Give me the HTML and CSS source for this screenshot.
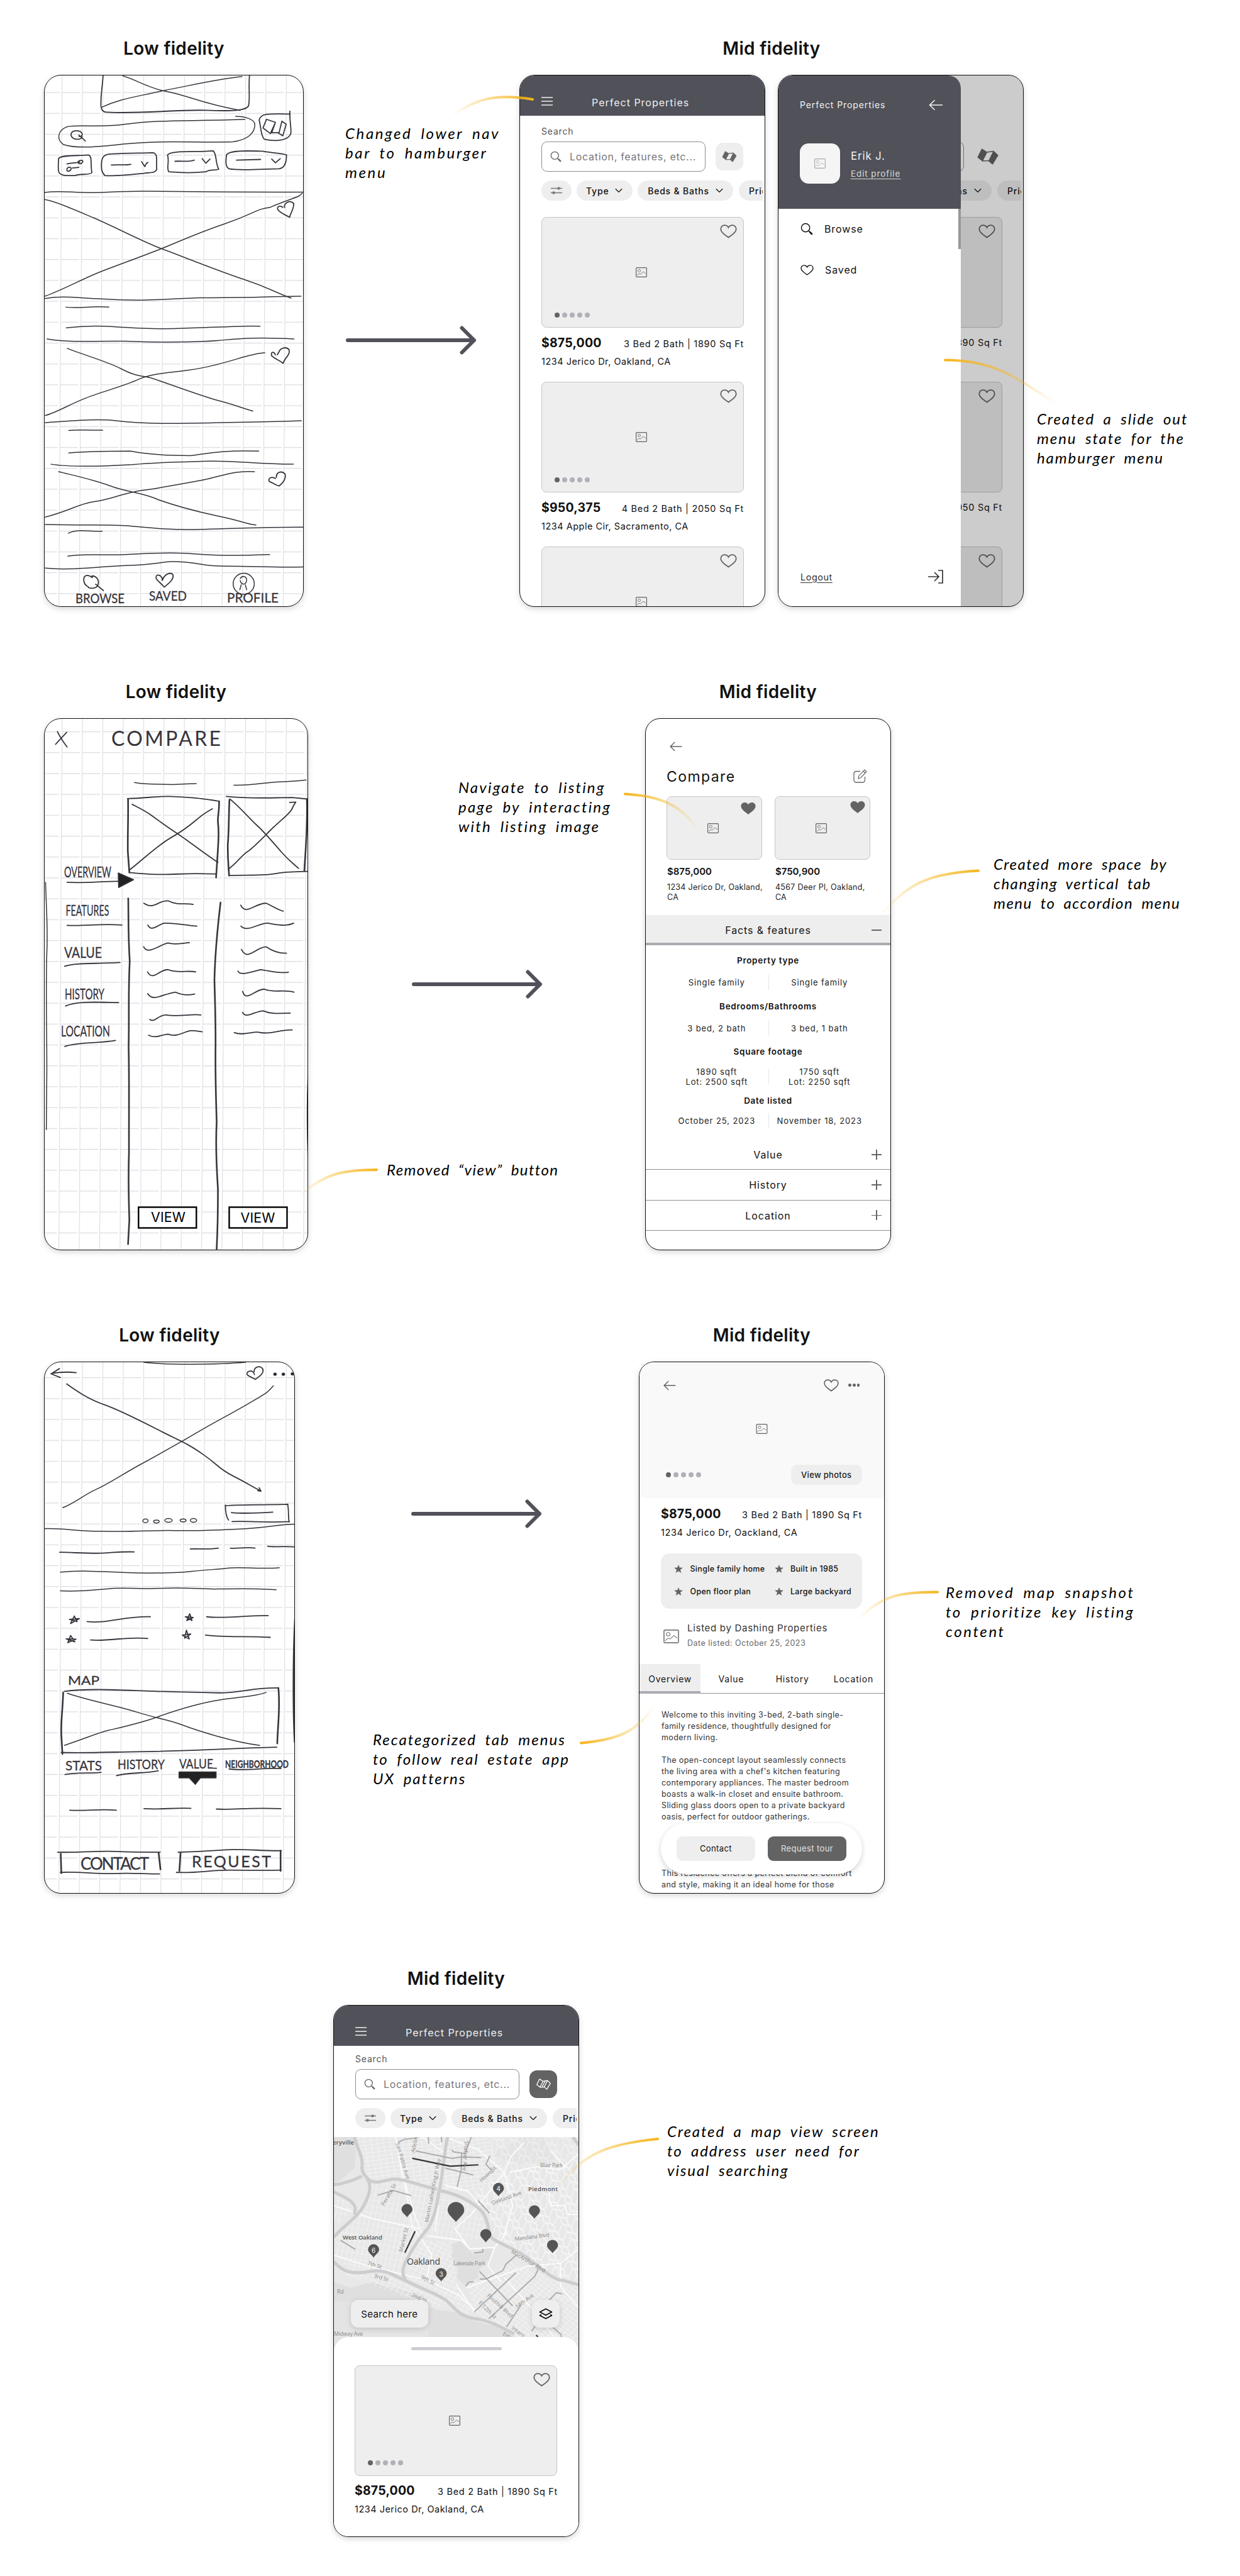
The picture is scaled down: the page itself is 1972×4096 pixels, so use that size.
FILE: index.html
```html
<!DOCTYPE html>
<html lang="en">

<head>
    <meta charset="UTF-8">
    <meta name="viewport" content="width=device-width, initial-scale=1.0">
    <title>Perfect Properties - Wireframes</title>

    <link rel="stylesheet" href="styles.css">
</head>

<body>
    <!-- shared icons -->
    <svg class="sprite" aria-hidden="true">
        <defs>
            <symbol id="icon-menu" viewBox="0 0 18 14">
                <path d="M0 1h18M0 7h18M0 13h18" fill="none" stroke="currentColor" stroke-width="1.4" />
            </symbol>
            <symbol id="icon-search" viewBox="0 0 18 18">
                <circle cx="7.3" cy="7.3" r="6" fill="none" stroke="currentColor" stroke-width="1.3" />
                <path d="M11.6 11.6l1.6 1.6" stroke="currentColor" stroke-width="1.2" />
                <path d="M13.4 13.4l2.8 2.8" stroke="currentColor" stroke-width="2.4" stroke-linecap="round" />
            </symbol>
            <symbol id="icon-map" viewBox="0 0 34 26">
                <path d="M7.500 1L1 14l7.500 6L15.500 6zM26 4.500L18.500 20l6 5L33 11z" fill="currentColor" stroke="currentColor" stroke-width="1.2" stroke-linejoin="round" />
                <path d="M15.500 6L26 4.500M8.500 20l10-.5" stroke="currentColor" stroke-width="1.6" />
            </symbol>
            <symbol id="icon-map-outline" viewBox="0 0 34 26">
                <path d="M7.500 1L1 14l7.500 6 10-.5 6 5.500L33 11l-7-6.500L15.500 6zM15.500 6L8.500 20M26 4.500L18.500 19.500M20.500 5.500L13.500 19.500" fill="none" stroke="currentColor" stroke-width="1.900" stroke-linejoin="round" />
            </symbol>
            <symbol id="icon-filter" viewBox="0 0 18 14">
                <path d="M0 3.500h18M0 10.500h18" stroke="currentColor" stroke-width="1.4" />
                <circle cx="12.500" cy="3.500" r="2.200" fill="currentColor" />
                <circle cx="4.500" cy="10.500" r="2.200" fill="currentColor" />
            </symbol>
            <symbol id="icon-chevron" viewBox="0 0 12 8">
                <path d="M.8 1.200L6 6.400l5.200-5.200" fill="none" stroke="currentColor" stroke-width="1.300" />
            </symbol>
            <symbol id="icon-heart" viewBox="0 0 28 23">
                <path d="M14 21.500C11 19 1.200 14 1.200 7.500 1.200 3.800 4 1.200 7.300 1.200c3 0 5.500 1.600 6.700 3.900 1.200-2.300 3.700-3.900 6.700-3.900 3.300 0 6.100 2.600 6.100 6.300C26.800 14 17 19 14 21.500z" fill="none" stroke="currentColor" stroke-width="1.900" />
            </symbol>
            <symbol id="icon-heart-fill" viewBox="0 0 28 23">
                <path d="M14 23C11 20 0 14.500 0 7 0 3 3 0 7 0c3 0 5.800 1.400 7 4 1.200-2.600 4-4 7-4 4 0 7 3 7 7 0 7.500-11 13-14 16z" fill="currentColor" />
            </symbol>
            <symbol id="icon-image" viewBox="0 0 18 16">
                <rect x=".6" y=".6" width="16.800" height="14.800" rx="1.200" fill="none" stroke="currentColor" stroke-width="1.200" />
                <circle cx="5.500" cy="5.500" r="2.100" fill="none" stroke="currentColor" stroke-width=".8" />
                <path d="M2 13l2.800-2.600 3 .5L12 7l4 3" fill="none" stroke="currentColor" stroke-width=".8" />
            </symbol>
            <symbol id="icon-back" viewBox="0 0 22 18">
                <path d="M21.500 9H1M9 1.200L1 9l8 7.800" fill="none" stroke="currentColor" stroke-width="1.600" />
            </symbol>
            <symbol id="icon-logout" viewBox="0 0 24 22">
                <path d="M0 11h17M10 4l7 7-7 7M16 1h7v20h-7" fill="none" stroke="currentColor" stroke-width="1.700" />
            </symbol>
            <symbol id="icon-edit" viewBox="0 0 22 22">
                <path d="M11 3.500H4.500A3.500 3.500 0 0 0 1 7v10.500A3.500 3.500 0 0 0 4.500 21H15a3.500 3.500 0 0 0 3.500-3.500V12" fill="none" stroke="currentColor" stroke-width="1.300" />
                <path d="M8 15l.8-4.300L18 1.200 21 4l-9.300 9.700zM16 3.300L19 6.200" fill="none" stroke="currentColor" stroke-width="1.200" />
            </symbol>
            <symbol id="icon-star" viewBox="0 0 14 13">
                <path d="M7 0l1.800 4.600 5.200.2-4.100 3.100L11.400 13 7 10.200 2.600 13l1.500-5.100L0 4.800l5.200-.2z" fill="currentColor" />
            </symbol>
            <symbol id="icon-layers" viewBox="0 0 22 18">
                <path d="M11 1.200l9.500 5L11 11.300l-9.500-5zM1 11.500l10 5.300 10-5.300M1 11.500l3-.8M21 11.500l-3-.8" fill="none" stroke="currentColor" stroke-width="1.800" stroke-linejoin="round" />
            </symbol>
            <symbol id="arrow" viewBox="0 0 208 46">
                <path d="M3 23h201M184.500 3.500L204 23l-19.500 19.500" fill="none" stroke="#505159" stroke-width="6" stroke-linecap="round" stroke-linejoin="round" />
            </symbol>
            <pattern id="grid" width="110" height="55.700" patternUnits="userSpaceOnUse" patternTransform="translate(48 46) skewX(-.7)">
                <path d="M0 0h4v55.700h-4z" fill="#dedee3" />
                <path d="M0 0h100v2h-100z" fill="#d9dade" />
            </pattern>
            <g id="pin">
                <path d="M0 0C-2-3.600-8.800-7.800-8.800-12.600a8.800 8.800 0 0 1 17.600 0C8.800-7.800 2-3.600 0 0z" fill="#555" />
            </g>
        </defs>
    </svg>

    <!-- 1. Browse -->
    <section class="row">
        <div class="stage stage-first">
            <h2>Low fidelity</h2>
            <div class="phone sketch sketch-browse">
                <svg width="413" height="846" viewBox="0 0 413 846">
                    <g transform="scale(.29476 .59607) translate(-65 -113)">
                        <rect class="paper" x="65" y="113" width="1402" height="1420" />
                        <g class="ink">
                            <path class="bold" d="M380 113C378 140 366 165 369 195 372 208 385 211 400 211 600 216 780 203 940 206S1150 205 1164 195C1175 180 1164 150 1170 113" />
                            <path d="M487 114C560 125 620 145 707 154 830 164 900 187 1120 206M372 198C470 175 540 172 700 154 860 139 1000 122 1130 116" />
                            <path d="M1145 230C900 235 700 230 500 243 370 253 240 243 185 250 135 260 128 283 165 297 240 310 380 302 490 296 700 285 900 293 1080 290 1165 285 1200 265 1199 243 1195 230 1150 222 1095 222" />
                            <path class="bold" d="M1388 208C1385 235 1400 260 1392 270 1370 290 1290 288 1250 283 1230 275 1230 240 1222 232 1230 215 1260 214 1390 216M1243 253L1262 230 1310 238 1283 268zM1310 238L1290 266 1330 265 1345 235 1368 243 1350 274 1325 266" />
                            <path class="bold" d="M268 277C262 285 215 287 207 272 208 260 235 259 255 262 275 268 270 277 250 275M250 272C260 278 272 280 284 288" />
                            <path class="bold" d="M140 335C150 324 250 328 300 325 325 328 310 350 320 372 310 380 250 374 230 380 190 380 150 382 141 370 136 360 140 345 140 335M186 349C215 345 235 347 255 344M245 343C255 338 275 338 270 344 262 350 245 350 245 343M215 360L250 358M185 365C185 357 208 355 208 362 205 369 185 371 185 365" />
                            <path class="bold" d="M372 345C375 325 400 322 430 322 510 320 600 320 650 319 680 322 665 345 670 362 665 375 630 371 600 374 520 378 450 382 390 380 370 370 370 360 372 345M425 352C460 350 500 353 530 350M588 343C595 348 600 352 606 356 610 350 615 346 622 345" />
                            <path class="bold" d="M728 325C745 312 880 318 975 314 995 325 985 345 1004 363 980 368 960 362 935 370 860 374 780 372 735 370 720 360 740 345 728 325M768 342C800 340 840 345 872 339M915 335L935 347 957 336" />
                            <path class="bold" d="M1046 325C1060 310 1200 315 1240 315 1290 320 1340 320 1370 325 1370 345 1360 360 1330 362 1250 362 1120 368 1060 362 1035 355 1045 335 1046 325M1100 339L1230 337M1290 336L1310 346 1336 335" />
                            <path d="M65 425C160 418 230 428 370 425 620 418 700 425 1460 424M65 708C160 700 230 706 370 709 600 716 700 710 900 706 1180 707 1300 702 1448 702" />
                            <path d="M65 444C130 450 220 470 330 493S600 558 700 576 1000 634 1140 657 1300 690 1395 707M65 702C140 690 280 653 380 634S600 594 700 574 880 535 1040 508 1200 470 1280 465C1400 440 1440 438 1455 427" />
                            <path class="bold" d="M1350 465C1340 460 1320 460 1322 470 1335 480 1370 487 1387 491 1390 480 1410 470 1409 455 1390 443 1350 455 1360 465" />
                            <path d="M180 731C260 735 320 727 411 731M182 786C330 778 420 783 500 785 700 792 800 787 950 785S1150 780 1227 782M78 816C200 827 330 820 500 822 700 826 900 824 1000 820S1200 810 1410 816" />
                            <path d="M187 841C240 853 400 875 480 896S600 914 640 920 920 970 1000 980 1130 1000 1188 1008M68 1020C130 1012 200 990 290 973S500 940 570 924 750 905 830 900 1000 884 1070 874 1200 854 1253 853" />
                            <path class="bold" d="M1310 858C1300 848 1283 850 1290 861 1310 870 1330 872 1352 881 1360 865 1390 860 1384 845 1370 835 1335 840 1330 850L1320 858" />
                            <path d="M68 1039C200 1035 340 1028 450 1034S640 1042 780 1041 1300 1037 1450 1034M195 1060C250 1057 300 1060 378 1059M195 1120C300 1115 400 1115 530 1115 640 1126 750 1127 850 1127 930 1123 1000 1112 1220 1115M100 1150C200 1158 400 1155 540 1151 700 1144 800 1144 950 1142S1200 1150 1407 1150" />
                            <path d="M141 1170C240 1182 320 1190 420 1208S590 1225 680 1245C880 1280 1000 1286 1100 1300S1160 1308 1205 1312M68 1291C200 1275 250 1255 330 1250S500 1226 590 1220 780 1205 900 1194 1080 1166 1197 1170" />
                            <path class="bold" d="M1310 1188C1290 1182 1268 1187 1277 1196 1300 1200 1310 1206 1330 1208 1350 1200 1370 1190 1362 1176 1345 1167 1315 1170 1315 1185" />
                            <path d="M68 1311C300 1314 420 1310 530 1315S740 1326 900 1324 1300 1317 1460 1318M193 1334C240 1322 300 1330 375 1329M190 1395C300 1388 400 1394 500 1391S740 1385 840 1388 1000 1396 1279 1391M68 1427C200 1434 320 1424 520 1420S700 1406 820 1411 900 1422 1050 1422 1300 1426 1460 1424" />
                            <path class="bold" d="M300 1477C270 1470 270 1450 290 1447 310 1443 330 1460 320 1448 345 1448 365 1460 350 1475 330 1485 300 1480 300 1477M340 1470L382 1487M700 1458C700 1445 660 1440 667 1455 680 1465 700 1470 710 1478 730 1470 770 1455 755 1443 735 1438 710 1445 700 1460" />
                            <ellipse cx="1139" cy="1469" rx="57" ry="28" />
                            <path d="M1120 1455C1130 1447 1155 1447 1155 1460 1150 1474 1125 1472 1120 1460M1125 1472L1118 1485M1148 1472L1155 1485" />
                        </g>
                    </g>
                    <g class="hand" font-size="21">
                        <text x="49" y="839" textLength="78" lengthAdjust="spacingAndGlyphs">BROWSE</text>
                        <text x="166" y="835" textLength="60" lengthAdjust="spacingAndGlyphs">SAVED</text>
                        <text x="290" y="838" textLength="82" lengthAdjust="spacingAndGlyphs">PROFILE</text>
                    </g>
                </svg>
            </div>
        </div>

        <div class="middle middle-browse">
            <p class="note note-browse">Changed lower nav<br>bar to hamburger<br>menu</p>
            <svg class="arrow" width="208" height="46"><use href="#arrow" /></svg>
        </div>

        <div class="stage stage-pair">
            <h2>Mid fidelity</h2>
            <div class="pair">
                <div class="phone">
                    <header class="topbar">
                        <svg width="18" height="14"><use href="#icon-menu" /></svg>
                        <span>Perfect Properties</span>
                    </header>
                    <div class="browse">
                        <div class="label">Search</div>
                        <div class="search-row">
                            <div class="search"><svg width="18" height="18"><use href="#icon-search" /></svg>Location, features, etc...</div>
                            <div class="map-button"><svg width="24" height="18"><use href="#icon-map" /></svg></div>
                        </div>
                        <div class="chips">
                            <div class="chip chip-filter"><svg width="18" height="14"><use href="#icon-filter" /></svg></div>
                            <div class="chip chip-type">Type<svg width="12" height="8"><use href="#icon-chevron" /></svg></div>
                            <div class="chip chip-beds">Beds &amp; Baths<svg width="12" height="8"><use href="#icon-chevron" /></svg></div>
                            <div class="chip chip-price">Price</div>
                        </div>
                        <article class="listing">
                            <div class="photo">
                                <svg class="heart" width="27" height="22"><use href="#icon-heart" /></svg>
                                <svg width="18" height="16"><use href="#icon-image" /></svg>
                                <div class="dots"><i></i><i></i><i></i><i></i><i></i></div>
                            </div>
                            <div class="facts"><b>$875,000</b><span>3 Bed 2 Bath | 1890 Sq Ft</span></div>
                            <div class="address">1234 Jerico Dr, Oakland, CA</div>
                        </article>
                        <article class="listing">
                            <div class="photo">
                                <svg class="heart" width="27" height="22"><use href="#icon-heart" /></svg>
                                <svg width="18" height="16"><use href="#icon-image" /></svg>
                                <div class="dots"><i></i><i></i><i></i><i></i><i></i></div>
                            </div>
                            <div class="facts"><b>$950,375</b><span>4 Bed 2 Bath | 2050 Sq Ft</span></div>
                            <div class="address">1234 Apple Cir, Sacramento, CA</div>
                        </article>
                        <article class="listing">
                            <div class="photo">
                                <svg class="heart" width="27" height="22"><use href="#icon-heart" /></svg>
                                <svg width="18" height="16"><use href="#icon-image" /></svg>
                            </div>
                        </article>
                    </div>
                </div>

                <div class="phone">
                    <header class="topbar topbar-blank"></header>
                    <div class="browse browse-back">
                        <div class="label">&nbsp;</div>
                        <div class="search-row">
                            <div class="search"></div>
                            <div class="map-button"><svg width="34" height="26"><use href="#icon-map" /></svg></div>
                        </div>
                        <div class="chips">
                            <div class="chip chip-filter"></div>
                            <div class="chip chip-type"></div>
                            <div class="chip chip-beds">Beds &amp; Baths<svg width="12" height="8"><use href="#icon-chevron" /></svg></div>
                            <div class="chip chip-price">Price</div>
                        </div>
                        <article class="listing">
                            <div class="photo"><svg class="heart" width="27" height="22"><use href="#icon-heart" /></svg></div>
                            <div class="facts"><b></b><span>3 Bed 2 Bath | 1890 Sq Ft</span></div>
                            <div class="address">&nbsp;</div>
                        </article>
                        <article class="listing">
                            <div class="photo"><svg class="heart" width="27" height="22"><use href="#icon-heart" /></svg></div>
                            <div class="facts"><b></b><span>4 Bed 2 Bath | 2050 Sq Ft</span></div>
                            <div class="address">&nbsp;</div>
                        </article>
                        <article class="listing">
                            <div class="photo"><svg class="heart" width="27" height="22"><use href="#icon-heart" /></svg></div>
                        </article>
                    </div>
                    <div class="scrim"></div>
                    <nav class="drawer">
                        <div class="drawer-head">
                            <div class="drawer-title"><span>Perfect Properties</span><svg width="23" height="18"><use href="#icon-back" /></svg></div>
                            <div class="profile">
                                <div class="avatar"><svg width="18" height="16"><use href="#icon-image" /></svg></div>
                                <div>
                                    <div class="name">Erik J.</div>
                                    <a class="edit">Edit profile</a>
                                </div>
                            </div>
                        </div>
                        <div class="drawer-body">
                            <div class="drawer-item"><svg width="20" height="20"><use href="#icon-search" /></svg>Browse</div>
                            <div class="drawer-item"><svg width="21" height="17"><use href="#icon-heart" /></svg>Saved</div>
                        </div>
                        <div class="drawer-foot"><a>Logout</a><svg width="24" height="22"><use href="#icon-logout" /></svg></div>
                        <div class="scrollbar"></div>
                    </nav>
                </div>
            </div>
        </div>

        <p class="note note-drawer">Created a slide out<br>menu state for the<br>hamburger menu</p>

        <svg class="lines" width="1972" height="1023">
            <defs>
                <linearGradient id="g1" gradientUnits="userSpaceOnUse" x1="719" y1="0" x2="847" y2="0"><stop offset="0" stop-color="#f5b51b" stop-opacity="0" /><stop offset="1" stop-color="#f5b51b" /></linearGradient>
                <linearGradient id="g2" gradientUnits="userSpaceOnUse" x1="1680" y1="0" x2="1502" y2="0"><stop offset="0" stop-color="#f5b51b" stop-opacity="0" /><stop offset="1" stop-color="#f5b51b" /></linearGradient>
            </defs>
            <path stroke="url(#g1)" d="M719 183C755 161 780 147 847 158" />
            <path stroke="url(#g2)" d="M1503 572.500C1580 572.500 1612 598 1680 642" />
        </svg>
    </section>

    <!-- 2. Compare -->
    <section class="row">
        <div class="stage stage-first">
            <h2>Low fidelity</h2>
            <div class="phone sketch sketch-compare">
                <svg width="420" height="846" viewBox="0 0 420 846">
                    <g transform="scale(.29476 .59607) translate(-65 -124)">
                        <rect class="paper" x="65" y="124" width="1426" height="1420" />
                        <g class="ink">
                            <path class="bold" d="M124 192C145 180 165 170 184 160M134 158C150 175 165 185 186 199" />
                            <path d="M550 294C620 300 680 298 730 299S820 297 883 297M1086 301C1180 303 1260 293 1330 292S1430 290 1475 287" />
                            <path class="bold" d="M512 337C620 335 680 330 740 331S900 334 1008 344M522 534C650 540 700 540 790 538S930 537 992 538" />
                            <path class="thick" d="M515 338C517 390 512 440 514 480L522 534M1006 345C1008 370 998 380 1000 400 1008 430 1000 470 990 547" />
                            <path class="bold" d="M537 352C580 363 610 370 640 381S750 420 790 433 940 488 1000 507M521 528C600 497 680 460 740 443S840 412 880 395 940 372 970 364" />
                            <path class="bold" d="M1045 331C1180 338 1300 334 1400 334L1485 338M1060 542C1150 540 1250 543 1310 537S1420 532 1486 531" />
                            <path class="thick" d="M1062 340C1058 380 1060 420 1053 460 1052 500 1058 520 1060 542M1480 338C1485 400 1476 450 1466 530" />
                            <path class="bold" d="M1064 338C1110 355 1170 390 1210 408S1300 455 1340 478 1400 507 1435 523M1056 525C1100 510 1130 487 1160 478S1260 432 1300 413 1400 372 1405 358L1420 346 1387 347" />
                            <path class="bold" d="M186 560C280 563 350 558 480 557" />
                            <path class="fill" d="M462 535L545 553 464 574z" />
                            <path class="thick" d="M516 603C518 660 515 700 524 770 515 860 522 900 518 1000 522 1080 519 1200 520 1280 516 1340 518 1400 522 1460L515 1525M1014 614C998 680 985 740 981 820 984 880 988 920 987 1000 985 1080 990 1140 993 1200 985 1280 995 1330 1000 1380 1000 1440 998 1490 993 1538" />
                            <path class="bold" d="M186 675C300 677 350 670 482 674M173 784C230 774 340 778 472 774M178 890C240 876 350 880 464 881M174 998C240 986 360 990 447 982" />
                            <path class="bold" d="M600 616C660 635 680 605 735 610 780 622 820 615 866 619M622 674C640 694 680 672 710 669 760 668 840 675 886 677M599 732C620 755 680 728 730 722 770 728 810 722 846 721M620 799C650 825 680 793 730 793 790 804 830 794 880 799M621 857C650 880 700 858 770 853 800 860 840 862 874 858M632 926C660 936 680 912 720 914 790 920 860 910 908 914M626 968C660 978 700 966 730 965 780 974 810 960 850 956 880 955 900 958 915 959" />
                            <path class="bold" d="M1123 621C1150 650 1200 615 1260 616 1290 622 1320 633 1352 637M1124 677C1160 695 1220 668 1270 669 1320 674 1370 678 1408 669M1127 739C1160 772 1200 734 1260 732 1290 742 1330 750 1370 749M1108 797C1120 810 1170 800 1230 793 1280 796 1330 804 1380 800M1133 851C1150 882 1200 845 1250 845 1300 856 1350 845 1410 853M1133 907C1150 926 1200 903 1245 903 1290 913 1340 909 1390 909M1088 961C1130 970 1190 957 1220 960 1280 967 1330 953 1400 954" />
                            <path d="M70 560C74 640 84 680 76 760 70 900 80 1000 76 1100M76 1100L74 1220M1488 1050C1478 1150 1480 1230 1488 1320" />
                        </g>
                        <g fill="#fff">
                            <rect x="574" y="1427" width="312" height="54" />
                            <rect x="1064" y="1427" width="312" height="54" />
                        </g>
                    </g>
                    <g fill="none" stroke="#000" stroke-width="2.400">
                        <rect x="149.300" y="776.500" width="92" height="33" />
                        <rect x="293.500" y="776.500" width="92" height="33" />
                    </g>
                    <g font-family="Inter, sans-serif" font-size="21.500">
                        <text x="169" y="800" textLength="55">VIEW</text>
                        <text x="311.500" y="801" textLength="55">VIEW</text>
                    </g>
                    <g class="hand" font-size="24">
                        <text class="thin" x="106" y="43" font-size="32" textLength="174">COMPARE</text>
                        <text x="31" y="252" textLength="75" lengthAdjust="spacingAndGlyphs">OVERVIEW</text>
                        <text x="33.500" y="313" textLength="69" lengthAdjust="spacingAndGlyphs">FEATURES</text>
                        <text x="31" y="380" textLength="60" lengthAdjust="spacingAndGlyphs">VALUE</text>
                        <text x="32" y="446" textLength="63" lengthAdjust="spacingAndGlyphs">HISTORY</text>
                        <text x="26" y="505" textLength="78" lengthAdjust="spacingAndGlyphs">LOCATION</text>
                    </g>
                </svg>
            </div>
        </div>

        <div class="middle middle-compare">
            <p class="note note-navigate">Navigate to listing<br>page by interacting<br>with listing image</p>
            <svg class="arrow" width="208" height="46"><use href="#arrow" /></svg>
            <p class="note note-removed">Removed “view” button</p>
        </div>

        <div class="stage">
            <h2>Mid fidelity</h2>
            <div class="phone compare">
                <svg class="back" width="20" height="16"><use href="#icon-back" /></svg>
                <div class="compare-title"><span>Compare</span><svg width="22" height="22"><use href="#icon-edit" /></svg></div>
                <div class="compare-cards">
                    <div class="compare-card">
                        <div class="photo">
                            <svg class="heart" width="24" height="19"><use href="#icon-heart-fill" /></svg>
                            <svg width="18" height="16"><use href="#icon-image" /></svg>
                        </div>
                        <b>$875,000</b>
                        <p>1234 Jerico Dr, Oakland,<br>CA</p>
                    </div>
                    <div class="compare-card">
                        <div class="photo">
                            <svg class="heart heart-high" width="24" height="19"><use href="#icon-heart-fill" /></svg>
                            <svg width="18" height="16"><use href="#icon-image" /></svg>
                        </div>
                        <b>$750,900</b>
                        <p>4567 Deer Pl, Oakland,<br>CA</p>
                    </div>
                </div>
                <div class="accordion accordion-open">Facts &amp; features<i class="sign"></i></div>
                <div class="details">
                    <h3>Property type</h3>
                    <div class="versus"><span>Single family</span><span>Single family</span></div>
                    <h3>Bedrooms/Bathrooms</h3>
                    <div class="versus"><span>3 bed, 2 bath</span><span>3 bed, 1 bath</span></div>
                    <h3>Square footage</h3>
                    <div class="versus versus-tall"><span>1890 sqft<br>Lot: 2500 sqft</span><span>1750 sqft<br>Lot: 2250 sqft</span></div>
                    <h3>Date listed</h3>
                    <div class="versus versus-date"><span>October 25, 2023</span><span>November 18, 2023</span></div>
                </div>
                <div class="accordion">Value<i class="sign plus"></i></div>
                <div class="accordion">History<i class="sign plus"></i></div>
                <div class="accordion">Location<i class="sign plus"></i></div>
            </div>
        </div>

        <p class="note note-accordion">Created more space by<br>changing vertical tab<br>menu to accordion menu</p>

        <svg class="lines" width="1972" height="1023">
            <defs>
                <linearGradient id="g3" gradientUnits="userSpaceOnUse" x1="1112" y1="0" x2="994" y2="0"><stop offset="0" stop-color="#f5b51b" stop-opacity="0" /><stop offset="1" stop-color="#f5b51b" /></linearGradient>
                <linearGradient id="g4" gradientUnits="userSpaceOnUse" x1="475" y1="0" x2="600" y2="0"><stop offset="0" stop-color="#f5b51b" stop-opacity="0" /><stop offset="1" stop-color="#f5b51b" /></linearGradient>
                <linearGradient id="g5" gradientUnits="userSpaceOnUse" x1="1400" y1="0" x2="1556" y2="0"><stop offset="0" stop-color="#f5b51b" stop-opacity="0" /><stop offset="1" stop-color="#f5b51b" /></linearGradient>
            </defs>
            <path stroke="url(#g3)" d="M994 239.500C1050 243 1080 255 1110 295" />
            <path stroke="url(#g4)" d="M476 879C515 843 545 837 599 837" />
            <path stroke="url(#g5)" d="M1401 432C1445 378 1485 365 1556 361.500" />
        </svg>
    </section>

    <!-- 3. Listing detail -->
    <section class="row">
        <div class="stage stage-first">
            <h2>Low fidelity</h2>
            <div class="phone sketch sketch-detail">
                <svg width="399" height="846" viewBox="0 0 399 846">
                    <g transform="scale(.29476 .59607) translate(-65 -117)">
                        <rect class="paper" x="65" y="117" width="1355" height="1420" />
                        <g class="ink">
                            <path class="bold" d="M145 134L100 148 150 158M100 147C150 143 190 142 235 145" />
                            <path class="bold" d="M1197 150C1190 135 1150 140 1157 150 1170 157 1190 158 1202 163 1220 155 1250 148 1242 135 1225 124 1195 130 1195 142" />
                            <ellipse class="fill" cx="1308" cy="149" rx="7" ry="3" /><ellipse class="fill" cx="1353" cy="149" rx="7" ry="3" /><ellipse class="fill" cx="1402" cy="148" rx="7" ry="3" />
                            <path class="bold" d="M184 175C240 195 300 215 390 231S600 278 700 303 830 332 920 363 1000 400 1080 420 1170 445 1232 461M1222 452L1232 461 1215 460" />
                            <path d="M163 505C220 495 280 470 340 457S500 412 570 393 800 330 900 301 1100 247 1180 223 1260 202 1299 180" />
                            <path d="M600 117C700 124 1000 124 1150 117M65 561C190 560 220 568 370 568 550 570 650 565 760 566S1000 565 1150 561 1300 551 1418 549" />
                            <ellipse cx="609" cy="540" rx="14" ry="5" /><ellipse cx="668" cy="542" rx="15" ry="4" /><ellipse cx="733" cy="539" rx="20" ry="5" /><ellipse cx="812" cy="539" rx="16" ry="4" /><ellipse cx="868" cy="539" rx="17" ry="5" />
                            <path class="bold" d="M1040 498C1040 515 1045 530 1057 538M1040 500C1120 496 1280 498 1378 496M1376 496C1384 515 1378 530 1384 543M1076 542C1180 540 1250 546 1386 542M1073 518C1130 521 1200 520 1296 517" />
                            <path class="bold" d="M146 624C240 625 330 628 390 626S480 622 548 623M851 615C900 614 950 617 1002 613M1067 613C1110 615 1150 609 1200 613M1268 608C1300 611 1350 607 1418 610" />
                            <path d="M150 677C300 670 420 678 560 679S780 680 860 675 1000 670 1060 666 1220 670 1331 665M150 727C300 730 360 722 440 720S560 723 700 720 900 723 1000 722 1220 720 1314 724" />
                            <path class="bold" d="M294 809C400 815 480 795 635 796M313 858C420 862 510 848 621 854M939 796C1050 802 1130 792 1271 793M933 845C1040 852 1140 847 1282 851" />
                            <path class="bold" d="M199 803L252 801 205 814 225 794 240 809zM181 855L234 856 190 865 205 846 228 863zM824 796L866 798 832 806 848 788 860 806zM808 845L853 842 820 853 830 832 845 855z" />
                            <path class="bold" d="M172 995C280 988 400 990 560 993S870 998 1000 999 1170 985 1328 986M155 1158C280 1160 430 1157 560 1156S900 1152 1030 1149 1230 1145 1317 1144" />
                            <path class="thick" d="M165 998C162 1050 150 1080 156 1120L161 1162M1326 986C1337 1040 1323 1080 1320 1134M1416 800C1405 900 1405 1050 1414 1130" />
                            <path d="M187 1000C300 1020 430 1030 560 1050S730 1070 810 1085 1080 1130 1225 1139M172 1139C300 1118 350 1106 410 1099S580 1080 670 1064 880 1028 1010 1018 1190 1010 1260 998" />
                            <path class="bold" d="M175 1217C240 1210 310 1215 370 1211M453 1220C520 1210 610 1215 678 1207M1060 1202C1150 1208 1250 1198 1340 1201M975 1200L992 1200" />
                            <path class="fill" d="M790 1210H990V1226H905L878 1243 845 1226H790z" />
                            <path class="bold" d="M200 1312C290 1315 350 1308 452 1312M601 1308C690 1311 760 1305 854 1307M992 1309C1100 1312 1150 1304 1340 1308" />
                            <path class="bold" d="M135 1424C250 1426 350 1420 440 1422S600 1424 688 1424M150 1478C250 1475 350 1483 440 1481S600 1482 685 1482M785 1424C950 1422 1000 1418 1080 1417S1250 1421 1342 1420M776 1478C900 1480 950 1472 1060 1472S1250 1473 1340 1472" />
                            <path class="thick" d="M152 1428L155 1480M680 1426L690 1470M798 1426L792 1474M1338 1420L1338 1474" />
                        </g>
                    </g>
                    <g class="hand" font-size="21">
                        <text x="37" y="513" textLength="50" lengthAdjust="spacingAndGlyphs" font-size="20">MAP</text>
                        <text x="33" y="649" textLength="58" lengthAdjust="spacingAndGlyphs">STATS</text>
                        <text x="116" y="647" textLength="75" lengthAdjust="spacingAndGlyphs">HISTORY</text>
                        <text x="214" y="646" textLength="54" lengthAdjust="spacingAndGlyphs">VALUE</text>
                        <text class="heavy" x="287" y="645" textLength="101" lengthAdjust="spacingAndGlyphs" font-size="17">NEIGHBORHOOD</text>
                        <text x="57" y="807" textLength="109" font-size="26">CONTACT</text>
                        <text x="234" y="803" textLength="126" font-size="25">REQUEST</text>
                    </g>
                </svg>
            </div>
        </div>

        <div class="middle middle-detail">
            <svg class="arrow" width="208" height="46"><use href="#arrow" /></svg>
            <p class="note note-tabs">Recategorized tab menus<br>to follow real estate app<br>UX patterns</p>
        </div>

        <div class="stage">
            <h2>Mid fidelity</h2>
            <div class="phone detail">
                <div class="hero">
                    <div class="hero-top">
                        <svg width="20" height="16"><use href="#icon-back" /></svg>
                        <svg class="hero-heart" width="24" height="20"><use href="#icon-heart" /></svg>
                        <div class="more"><i></i><i></i><i></i></div>
                    </div>
                    <svg class="hero-image" width="19" height="16"><use href="#icon-image" /></svg>
                    <div class="hero-bottom">
                        <div class="dots"><i></i><i></i><i></i><i></i><i></i></div>
                        <div class="view-photos">View photos</div>
                    </div>
                </div>
                <div class="summary">
                    <div class="facts"><b>$875,000</b><span>3 Bed 2 Bath | 1890 Sq Ft</span></div>
                    <div class="address address-wide">1234 Jerico Dr, Oackland, CA</div>
                    <div class="features">
                        <div><svg width="14" height="13"><use href="#icon-star" /></svg>Single family home</div>
                        <div><svg width="14" height="13"><use href="#icon-star" /></svg>Built in 1985</div>
                        <div><svg width="14" height="13"><use href="#icon-star" /></svg>Open floor plan</div>
                        <div><svg width="14" height="13"><use href="#icon-star" /></svg>Large backyard</div>
                    </div>
                    <div class="listed">
                        <svg width="25" height="22"><use href="#icon-image" /></svg>
                        <div>
                            <div class="agent">Listed by Dashing Properties</div>
                            <div class="date">Date listed: October 25, 2023</div>
                        </div>
                    </div>
                </div>
                <div class="tabs"><span class="active">Overview</span><span>Value</span><span>History</span><span>Location</span></div>
                <div class="copy">
                    <p>Welcome to this inviting 3-bed, 2-bath single-<br>family residence, thoughtfully designed for<br>modern living.</p>
                    <p>The open-concept layout seamlessly connects<br>the living area with a chef's kitchen featuring<br>contemporary appliances. The master bedroom<br>boasts a walk-in closet and ensuite bathroom.<br>Sliding glass doors open to a private backyard<br>oasis, perfect for outdoor gatherings.</p>
                    <p class="copy-last">This residence offers a perfect blend of comfort<br>and style, making it an ideal home for those</p>
                </div>
                <div class="actions"><div class="button">Contact</div><div class="button button-dark">Request tour</div></div>
            </div>
        </div>

        <p class="note note-map-removed">Removed map snapshot<br>to prioritize key listing<br>content</p>

        <svg class="lines" width="1972" height="1023">
            <defs>
                <linearGradient id="g6" gradientUnits="userSpaceOnUse" x1="1042" y1="0" x2="922" y2="0"><stop offset="0" stop-color="#f5b51b" stop-opacity="0" /><stop offset="1" stop-color="#f5b51b" /></linearGradient>
                <linearGradient id="g7" gradientUnits="userSpaceOnUse" x1="1364" y1="0" x2="1491" y2="0"><stop offset="0" stop-color="#f5b51b" stop-opacity="0" /><stop offset="1" stop-color="#f5b51b" /></linearGradient>
            </defs>
            <path stroke="url(#g6)" d="M924 725.500C980 720 1010 710 1039 669" />
            <path stroke="url(#g7)" d="M1366 528C1402 490 1435 485 1491 485.500" />
        </svg>
    </section>

    <!-- 4. Map view -->
    <section class="row row-last">
        <div class="stage stage-map">
            <h2>Mid fidelity</h2>
            <div class="phone mapview">
                <header class="topbar">
                    <svg width="18" height="14"><use href="#icon-menu" /></svg>
                    <span>Perfect Properties</span>
                </header>
                <div class="browse browse-map">
                    <div class="label">Search</div>
                    <div class="search-row">
                        <div class="search"><svg width="18" height="18"><use href="#icon-search" /></svg>Location, features, etc...</div>
                        <div class="map-button map-button-on"><svg width="23" height="18"><use href="#icon-map-outline" /></svg></div>
                    </div>
                    <div class="chips">
                        <div class="chip chip-filter"><svg width="18" height="14"><use href="#icon-filter" /></svg></div>
                        <div class="chip chip-type">Type<svg width="12" height="8"><use href="#icon-chevron" /></svg></div>
                        <div class="chip chip-beds">Beds &amp; Baths<svg width="12" height="8"><use href="#icon-chevron" /></svg></div>
                        <div class="chip chip-price">Price</div>
                    </div>
                </div>
                <div class="map">
                    <svg width="390" height="336" viewBox="0 0 390 336">
                        <defs>
                            <pattern id="s1" width="30" height="42" patternUnits="userSpaceOnUse" patternTransform="rotate(11)"><path d="M0 0H30M0 0V42" class="street" /></pattern>
                            <pattern id="s2" width="38" height="28" patternUnits="userSpaceOnUse" patternTransform="rotate(-8)"><path d="M0 0H38M0 0V28" class="street" /></pattern>
                            <pattern id="s3" width="34" height="30" patternUnits="userSpaceOnUse" patternTransform="rotate(27)"><path d="M0 0H34M0 0V30" class="street" /></pattern>
                            <pattern id="s4" width="32" height="26" patternUnits="userSpaceOnUse" patternTransform="rotate(40)"><path d="M0 0H32M0 0V26" class="street" /></pattern>
                            <pattern id="s5" width="90" height="60" patternUnits="userSpaceOnUse" patternTransform="rotate(-28)"><path d="M0 30Q22 0 45 30T90 30M20 0Q45 30 20 60M65 0Q40 30 65 60" class="street" /></pattern>
                        </defs>
                        <rect width="390" height="336" fill="#e8e8e8" />
                        <g transform="scale(.26201 .22925) translate(-25 -84)">
                            <path fill="#dfdfdf" d="M25 84H150L160 180 150 300 60 390 25 400zM740 830L790 805 830 850 870 900 935 850 990 860 970 930 900 1010 900 1060 820 1110 770 1060 780 1000 740 930zM25 1090L130 1130 250 1090 560 1180 640 1280 780 1300 880 1360 1080 1420 1180 1550H25z" />
                            <path fill="#e4e4e4" d="M980 200L1180 84 1300 84 1330 180 1390 230 1200 280 1060 240zM25 1220L600 1250 600 1550H25z" />
                            <path fill="url(#s2)" d="M170 84H700L660 430 400 370 250 390 205 330z" />
                            <path fill="url(#s2)" d="M720 84H960L1060 330 860 470 680 440z" />
                            <path fill="url(#s1)" d="M250 400L400 385 640 450 600 700 450 1040 250 1000 130 1010 30 900 30 780 230 560zM25 470L150 560 25 720z" />
                            <path fill="url(#s1)" d="M680 480L830 540 930 650 970 790 740 810 600 760z" />
                            <path fill="url(#s3)" d="M470 1040L540 800 740 810 760 1000 780 1120 900 1300 800 1310 460 1090zM50 1010L400 1060 700 1250 600 1270 200 1080z" />
                            <path fill="url(#s4)" d="M840 1120L1100 950 1330 1060 1512 1120V1550H1250L900 1330z" />
                            <path fill="url(#s5)" d="M1060 330L1512 260V1080L1360 1050 1000 800 960 620 860 480z" />
                            <path fill="url(#s5)" opacity=".6" d="M960 84H1512V330L1060 330z" />
                            <g class="road-white">
                                <path d="M560 84L690 190M400 84L440 340 520 640 560 760M700 84L900 170 1060 330 1110 560 1060 760M25 560L260 650 540 720M850 860L760 720 860 620 1060 330M590 770L800 800 850 860 1000 850 1080 740M1000 850L960 980 1040 1090M700 420L840 460 900 540M770 1110L880 1300M830 1130L1000 1060 1200 980 1400 960 1512 860M25 905L240 980 600 1080 780 1180 900 1300M450 380L500 700 620 900 590 1060M1090 330L1250 290 1400 310 1512 200M1180 120L1100 220 1060 330M1340 180L1430 290M660 560L640 740M1400 960L1400 1120 1512 1270M1060 1060L1240 1290 1360 1470M1512 620H1440L1430 560H1340L1330 470" />
                            </g>
                            <g class="freeway">
                                <path d="M150 84C170 180 205 220 195 300 200 350 230 370 250 390 300 410 350 375 400 375 480 380 560 430 650 445M25 415C100 405 150 380 195 355M225 370C260 420 240 500 190 590 130 680 60 720 25 780M25 465C90 500 150 530 155 580L150 620M715 84C690 220 690 330 665 450 650 550 640 630 600 710 540 790 500 860 460 950 430 1020 450 1060 460 1070M665 455C780 480 880 540 930 610 980 700 950 760 990 790 1060 840 1150 870 1230 950 1300 1000 1340 1070 1420 1080L1512 1110M25 950C80 1020 130 1040 250 1015 350 1000 390 1050 460 1080 560 1140 650 1170 710 1220 780 1300 800 1330 890 1345 980 1360 1050 1410 1120 1450M1475 84L1512 140" />
                            </g>
                            <g class="road-grey">
                                <path d="M520 180L740 232 800 222 920 226M740 175L755 188 820 198 860 84M800 200L798 310 773 430M702 300L870 347M972 215L948 272 992 330M900 525L970 612M290 488L385 455 494 490M65 800L155 863M875 888L928 882 930 860M825 1118L845 1090 873 1088M908 1015L1110 1255M1130 1025L877 1298M1265 1000L1245 1050 965 1345M1130 905L1070 965 1050 1010 950 1068 910 1070M1160 1250L1073 1402M1320 1230L1375 1163 1410 1172M1250 1390L1225 1432M1350 1400L1405 1455V1500M597 84L601 130M677 84L680 118M415 120L455 100 530 90" />
                            </g>
                            <path class="road-dark" d="M501 232L730 286 902 277M518 737L456 886" />
                            <path class="road-dark" d="M1252 1458L1264 1470" />
                        </g>
                        <g class="map-text">
                            <g fill="#555" font-weight="600">
                                <text x="-2" y="12" font-size="9.500" textLength="34">eryville</text>
                                <text x="309" y="86" font-size="9.500" textLength="47">Piedmont</text>
                                <text x="14" y="163" font-size="9.500" textLength="63">West Oakland</text>
                            </g>
                            <text x="116" y="203" font-size="14" fill="#444" textLength="53">Oakland</text>
                            <text x="328" y="48" textLength="36">Blair Park</text>
                            <text x="190" y="204" textLength="51">Lakeside Park</text>
                            <text x="5" y="249">Rd</text>
                            <text x="0" y="316" textLength="46">Midway Ave</text>
                            <text transform="translate(98 10) rotate(73)" textLength="60">San Pablo Ave</text>
                            <text transform="translate(128 25) rotate(-77)">Adeline</text>
                            <text transform="translate(150 136) rotate(-79)" textLength="103">Martin Luther King Jr Way</text>
                            <text transform="translate(208 6) rotate(94)" textLength="48">Shafter Ave</text>
                            <text transform="translate(235 72) rotate(-43)">Howe St</text>
                            <text transform="translate(252 108) rotate(-20)" textLength="50">Oakland Ave</text>
                            <text transform="translate(80 110) rotate(-60)" textLength="39">Peralta St</text>
                            <text transform="translate(109 183) rotate(-76)" textLength="39">Market St</text>
                            <text transform="translate(53 203) rotate(17)">7th St</text>
                            <text transform="translate(63 223) rotate(17)">3rd St</text>
                            <text transform="translate(138 225) rotate(27)">9th St</text>
                            <text transform="translate(123 253) rotate(25)">2nd St</text>
                            <text transform="translate(288 165) rotate(-7)" textLength="55">Mandana Blvd</text>
                            <text transform="translate(281 184) rotate(31)" textLength="62">MacArthur Blvd</text>
                            <text transform="translate(243 253) rotate(42)" textLength="52">Foothill Blvd</text>
                            <text transform="translate(230 264) rotate(46)" textLength="36">E 12th St</text>
                            <text transform="translate(291 273) rotate(-36)" textLength="34">14th Ave</text>
                            <text transform="translate(282 305) rotate(37)">Intern</text>
                            <text transform="translate(268 315) rotate(25)">Em</text>
                        </g>
                        <use href="#pin" transform="translate(116.300 127.700)" />
                        <use href="#pin" transform="translate(318.900 129.800)" />
                        <use href="#pin" transform="translate(241.600 167.600)" />
                        <use href="#pin" transform="translate(347.700 184.800)" />
                        <use href="#pin" transform="translate(261.700 94.200)" />
                        <use href="#pin" transform="translate(63.100 191.700)" />
                        <use href="#pin" transform="translate(170.600 229.700)" />
                        <use href="#pin" transform="translate(194.100 135.300) scale(1.500)" />
                        <g class="pin-text">
                            <text x="261.700" y="86">4</text>
                            <text x="63.100" y="183.500">6</text>
                            <text x="170.600" y="221.500">3</text>
                        </g>
                    </svg>
                    <div class="map-controls">
                        <div class="search-here">Search here</div>
                        <div class="layers"><svg width="22" height="18"><use href="#icon-layers" /></svg></div>
                    </div>
                </div>
                <div class="sheet">
                    <div class="handle"></div>
                    <article class="listing">
                        <div class="photo">
                            <svg class="heart" width="27" height="22"><use href="#icon-heart" /></svg>
                            <svg width="18" height="16"><use href="#icon-image" /></svg>
                            <div class="dots"><i></i><i></i><i></i><i></i><i></i></div>
                        </div>
                        <div class="facts"><b>$875,000</b><span>3 Bed 2 Bath | 1890 Sq Ft</span></div>
                        <div class="address">1234 Jerico Dr, Oakland, CA</div>
                    </article>
                </div>
            </div>
        </div>

        <p class="note note-mapview">Created a map view screen<br>to address user need for<br>visual searching</p>

        <svg class="lines" width="1972" height="1027">
            <defs>
                <linearGradient id="g8" gradientUnits="userSpaceOnUse" x1="888" y1="0" x2="1047" y2="0"><stop offset="0" stop-color="#f5b51b" stop-opacity="0" /><stop offset="1" stop-color="#f5b51b" /></linearGradient>
            </defs>
            <path stroke="url(#g8)" d="M891 404C930 352 975 339 1046 332" />
        </svg>
    </section>
</body>

</html>
```
FILE: styles.css
```css
* {
    box-sizing: border-box;
}

body {
    margin: 0;
    width: 1972px;
    background: #fff;
    color: #111;
    font-family: Inter, "Open Sans", sans-serif;
}

h2,
h3,
p {
    margin: 0;
}

svg {
    display: block;
    flex: none;
}

.sprite {
    position: absolute;
    width: 0;
    height: 0;
}

/* page rows */
.row {
    position: relative;
    display: flex;
    align-items: flex-start;
    height: 1023px;
}

.row-last {
    height: 1027px;
}

.stage {
    flex: none;
    padding-top: 60px;
}

.stage-first {
    margin-left: 70px;
}

.stage-map {
    margin-left: 530px;
}

.stage h2 {
    margin-bottom: 25px;
    font-size: 28px;
    font-weight: 600;
    line-height: 34px;
    letter-spacing: 0.3px;
    text-align: center;
    white-space: nowrap;
}

.pair {
    display: flex;
    gap: 20px;
}

.middle {
    flex: none;
}

.middle-browse {
    width: 343px;
    padding: 196px 0 0 66px;
}

.middle-browse .arrow {
    margin: 229px 0 0 1px;
}

.middle-compare {
    width: 536px;
    padding-top: 213px;
}

.middle-compare .arrow {
    margin: 213px 0 0 165px;
}

.middle-detail {
    width: 547px;
    padding: 338px 0 0 124px;
}

.middle-detail .arrow {
    margin: 0 0 320px 61px;
}

.note {
    font-family: Lato, "Open Sans", sans-serif;
    font-size: 24px;
    font-style: italic;
    font-weight: 400;
    line-height: 31px;
    letter-spacing: 1.9px;
    word-spacing: 6px;
    color: #000;
    white-space: nowrap;
}

.note-browse {
    letter-spacing: 2.600px;
}

.note-navigate {
    margin-left: 239px;
    letter-spacing: 2.200px;
}

.note-removed {
    margin: 256px 0 0 125px;
    letter-spacing: 1.400px;
}

.note-tabs {
    letter-spacing: 2px;
}

.note-drawer {
    margin: 650px 0 0 21px;
}

.note-accordion {
    margin: 335px 0 0 163px;
    letter-spacing: 1.500px;
}

.note-map-removed {
    margin: 470px 0 0 97px;
    letter-spacing: 2.600px;
}

.note-mapview {
    margin: 304px 0 0 140px;
}

.lines {
    position: absolute;
    top: 0;
    left: 0;
    pointer-events: none;
}

.lines path {
    fill: none;
    stroke-width: 4;
    stroke-linecap: round;
}

/* phone frame */
.phone {
    position: relative;
    width: 391px;
    height: 846px;
    overflow: hidden;
    background: #fff;
    border: 1px solid #111;
    border-radius: 24px;
    box-shadow: 0 3px 10px rgba(0, 0, 0, 0.16);
}

/* paper sketches */
.sketch {
    border-radius: 27px;
}

.sketch-browse {
    width: 413px;
}

.sketch-compare {
    width: 420px;
}

.sketch-detail {
    width: 399px;
}

.paper {
    fill: url(#grid);
}

.ink path,
.ink ellipse {
    fill: none;
    stroke: #37343c;
    stroke-width: 1.500;
    stroke-linecap: round;
    stroke-linejoin: round;
    vector-effect: non-scaling-stroke;
}

.ink .bold {
    stroke-width: 1.800;
}

.ink .thick {
    stroke-width: 2.600;
}

.ink .fill {
    fill: #222;
}

.hand {
    font-family: Lato, "Open Sans", sans-serif;
    font-weight: 400;
    fill: #37343c;
    stroke: #37343c;
    stroke-width: 0.3;
}

.hand .thin {
    stroke: none;
}

.hand .heavy {
    font-weight: 700;
}

/* browse screen */
.topbar {
    display: flex;
    align-items: flex-end;
    height: 64px;
    padding: 0 0 11px 34px;
    background: #505159;
    color: #eee;
    font-size: 16px;
    line-height: 20px;
    letter-spacing: 1px;
}

.topbar svg {
    margin: 0 62px 5px 0;
}

.topbar-blank {
    background: none;
}

.browse {
    padding: 16px 33px 0 34px;
}

.browse-map {
    height: 145px;
    padding-top: 12px;
}

.label {
    margin-bottom: 7px;
    color: #555;
    font-size: 14px;
    line-height: 18px;
    letter-spacing: 0.8px;
}

.search-row {
    display: flex;
    align-items: center;
    gap: 16.500px;
}

.search {
    display: flex;
    align-items: center;
    width: 260.500px;
    height: 48px;
    padding-left: 13px;
    border: 1px solid #8d8d92;
    border-radius: 9px;
    color: #77777b;
    font-size: 16px;
    letter-spacing: 0.7px;
    white-space: nowrap;
}

.search svg {
    margin-right: 13px;
    color: #666;
}

.map-button {
    display: flex;
    align-items: center;
    justify-content: center;
    width: 44px;
    height: 44px;
    border-radius: 12px;
    background: #eee;
    color: #636363;
}

.map-button-on {
    background: #636363;
    color: #fff;
}

.browse-back .map-button {
    background: none;
}

.chips {
    display: flex;
    gap: 8.500px;
    margin: 14px -30px 26px 0;
    overflow: hidden;
}

.chip {
    display: flex;
    flex: none;
    align-items: center;
    justify-content: center;
    gap: 10px;
    height: 32px;
    border-radius: 16px;
    background: #eee;
    font-size: 14px;
    font-weight: 500;
    letter-spacing: 0.8px;
    white-space: nowrap;
}

.chip-filter {
    width: 47.500px;
    color: #777;
}

.chip-type {
    width: 88.500px;
}

.chip-beds {
    width: 152px;
}

.chip-price {
    width: 90px;
    justify-content: flex-start;
    padding-left: 16.500px;
}

.listing {
    margin-bottom: 23px;
}

.photo {
    position: relative;
    display: flex;
    align-items: center;
    justify-content: center;
    width: 322px;
    height: 176px;
    border: 1px solid #c4c5c9;
    border-radius: 8px;
    background: #eee;
    color: #636363;
}

.photo > svg {
    margin-right: 4px;
}

.photo .heart {
    position: absolute;
    top: 11px;
    right: 10px;
    margin: 0;
}

.photo .dots {
    position: absolute;
    left: 20px;
    bottom: 15.500px;
}

.dots {
    display: flex;
    gap: 4px;
}

.dots i {
    width: 8px;
    height: 8px;
    border-radius: 50%;
    background: #b0b1b8;
}

.dots i:first-child {
    background: #636363;
}

.facts {
    display: flex;
    align-items: baseline;
    justify-content: space-between;
    height: 24px;
    margin-top: 12px;
    line-height: 24px;
    white-space: nowrap;
}

.facts b {
    font-size: 19.500px;
    font-weight: 700;
    letter-spacing: 0.2px;
}

.facts span {
    font-size: 14.500px;
    letter-spacing: 0.7px;
}

.address {
    margin-top: 9px;
    font-size: 14.500px;
    line-height: 18px;
    letter-spacing: 0.5px;
    white-space: nowrap;
}

.address-wide {
    letter-spacing: 0.600px;
}

/* slide out menu */
.scrim {
    position: absolute;
    inset: 0;
    background: rgba(0, 0, 0, 0.2);
}

.drawer {
    position: absolute;
    top: 0;
    left: 0;
    display: flex;
    flex-direction: column;
    width: 290px;
    height: 844px;
    border-radius: 0 20px 0 0;
    background: #fff;
    overflow: hidden;
}

.drawer-head {
    height: 212px;
    padding: 37px 28px 0 34px;
    background: #505159;
    color: #f2f2f2;
}

.drawer-title {
    display: flex;
    align-items: center;
    justify-content: space-between;
    font-size: 14px;
    line-height: 20px;
    letter-spacing: 0.9px;
}

.profile {
    display: flex;
    gap: 17px;
    margin-top: 51px;
}

.avatar {
    display: flex;
    align-items: center;
    justify-content: center;
    width: 64px;
    height: 64px;
    border-radius: 14px;
    background: #f5f5f5;
    color: #aaa;
}

.name {
    padding-top: 9px;
    font-size: 17px;
    line-height: 22px;
    letter-spacing: 0.8px;
}

.edit {
    display: block;
    margin-top: 8px;
    font-size: 13.500px;
    line-height: 18px;
    letter-spacing: 0.9px;
    text-decoration: underline;
    text-underline-offset: 3px;
    color: #dadada;
}

.drawer-body {
    flex: 1;
    padding: 22px 0 0 35px;
}

.drawer-item {
    display: flex;
    align-items: center;
    gap: 18px;
    height: 20px;
    margin-bottom: 45px;
    font-size: 16px;
    letter-spacing: 0.9px;
}

.drawer-foot {
    display: flex;
    align-items: center;
    justify-content: space-between;
    padding: 0 28px 36px 35px;
    font-size: 14.500px;
    letter-spacing: 0.5px;
    color: #333;
}

.drawer-foot a {
    text-decoration: underline;
    text-underline-offset: 3px;
}

.scrollbar {
    position: absolute;
    top: 212px;
    right: 0;
    width: 4px;
    height: 64px;
    background: #98989b;
}

/* compare screen */
.compare {
    padding-top: 36px;
}

.back {
    margin-left: 38px;
    color: #666;
}

.compare-title {
    display: flex;
    justify-content: space-between;
    margin: 26px 37px 17px 33px;
    font-size: 23px;
    font-weight: 400;
    line-height: 28px;
    letter-spacing: 1.4px;
}

.compare-title svg {
    margin-top: 2px;
    color: #666;
}

.compare-cards {
    display: flex;
    gap: 19px;
    margin-left: 33px;
}

.compare-card .photo {
    width: 152px;
    height: 101px;
}

.compare-card .heart {
    top: 9px;
    right: 9px;
}

.compare-card .heart-high {
    top: 7px;
    right: 7px;
}

.compare-card b {
    display: block;
    margin: 9px 0 7px 1px;
    font-size: 15px;
    font-weight: 600;
    line-height: 20px;
}

.compare-card p {
    height: 52px;
    margin-left: 1px;
    font-size: 12.500px;
    line-height: 16px;
    letter-spacing: 0.3px;
    color: #222;
    white-space: nowrap;
}

.accordion {
    position: relative;
    height: 48.300px;
    padding-top: 13px;
    border-bottom: 1px solid #909090;
    font-size: 16px;
    line-height: 22px;
    letter-spacing: 0.9px;
    text-align: center;
}

.accordion-open {
    height: 48px;
    border-bottom: 4px solid #a9abb0;
    background: #eee;
}

.sign {
    position: absolute;
    top: 23px;
    right: 14px;
    width: 16px;
    height: 1.500px;
    background: #666;
}

.plus::after {
    content: "";
    position: absolute;
    top: -7.500px;
    left: 7px;
    width: 1.700px;
    height: 16px;
    background: #666;
}

.details {
    height: 309px;
    padding: 15px 31px 0;
    text-align: center;
}

.details h3 {
    margin-bottom: 14px;
    font-size: 13.500px;
    font-weight: 600;
    line-height: 18px;
    letter-spacing: 0.7px;
}

.versus {
    position: relative;
    display: flex;
    align-items: center;
    height: 24.500px;
    margin-bottom: 16px;
    font-size: 13px;
    line-height: 16px;
    letter-spacing: 0.9px;
    color: #222;
}

.versus span {
    width: 50%;
}

.versus::after {
    content: "";
    position: absolute;
    left: 50%;
    width: 1.500px;
    height: 24px;
    background: #e5e5e5;
}

.versus-tall {
    height: 33px;
    margin-bottom: 13px;
}

.versus-date {
    margin-top: -3px;
}

/* listing detail screen */
.hero {
    height: 215.500px;
    padding: 26px 35px 0 38px;
    border-radius: 0 0 8px 8px;
    background: #f9f9f9;
    color: #636363;
}

.hero-top {
    display: flex;
    align-items: center;
    height: 21px;
}

.hero-heart {
    margin-left: 235px;
}

.more {
    display: flex;
    gap: 2px;
    margin-left: 15px;
}

.more i {
    width: 4.800px;
    height: 4.800px;
    border-radius: 50%;
    background: #636363;
}

.hero-image {
    margin: 51px 0 49px 147px;
}

.hero-bottom {
    display: flex;
    align-items: center;
    justify-content: space-between;
    margin-left: 4px;
}

.view-photos {
    width: 113.500px;
    height: 32px;
    border-radius: 11px;
    background: #eee;
    color: #222;
    font-size: 13px;
    font-weight: 500;
    line-height: 32px;
    letter-spacing: 0.3px;
    text-align: center;
}

.summary {
    padding: 1px 35px 0 34px;
}

.features {
    display: flex;
    flex-wrap: wrap;
    align-content: flex-start;
    row-gap: 18px;
    height: 88px;
    margin-top: 24px;
    padding: 16px 0 0 21px;
    border-radius: 14px;
    background: #eee;
    font-size: 12.500px;
    font-weight: 500;
    line-height: 18px;
    letter-spacing: 0.3px;
    white-space: nowrap;
}

.features div {
    display: flex;
    align-items: center;
    gap: 11.500px;
    width: 138px;
}

.features div:nth-child(odd) {
    width: 159.500px;
}

.features svg {
    color: #636363;
}

.listed {
    display: flex;
    gap: 13px;
    margin: 22px 0 24px 4px;
    white-space: nowrap;
}

.listed svg {
    margin-top: 11px;
    color: #777;
}

.agent {
    color: #333;
    font-size: 15px;
    line-height: 18px;
    letter-spacing: 0.7px;
}

.date {
    margin-top: 6px;
    color: #666;
    font-size: 12.500px;
    line-height: 18px;
    letter-spacing: 0.5px;
}

.tabs {
    display: flex;
    height: 47px;
    border-bottom: 1px solid #909090;
    font-size: 14px;
    line-height: 48px;
    letter-spacing: 0.8px;
    text-align: center;
}

.tabs span {
    width: 98px;
}

.tabs .active {
    height: 47px;
    border-bottom: 4px solid #a9abb0;
    background: #eee;
}

.copy {
    padding: 25px 0 0 35px;
    color: #333;
    font-size: 12.500px;
    line-height: 18.050px;
    letter-spacing: 0.4px;
    white-space: nowrap;
}

.copy p {
    margin-bottom: 18px;
}

.copy .copy-last {
    margin-top: 72px;
}

.actions {
    position: absolute;
    top: 733px;
    left: 34px;
    display: flex;
    gap: 20px;
    width: 320px;
    height: 81px;
    padding: 21px 25px;
    border-radius: 40px;
    background: #fff;
    box-shadow: 0 3px 8px rgba(0, 0, 0, 0.18);
}

.button {
    width: 125.500px;
    height: 39px;
    border-radius: 9px;
    background: #eee;
    font-size: 13px;
    line-height: 39px;
    letter-spacing: 0.4px;
    text-align: center;
}

.button-dark {
    background: #636363;
    color: #e2e2e2;
}

/* map screen */
.map {
    position: relative;
    height: 318px;
}

.map-controls {
    position: absolute;
    top: 259px;
    left: 27px;
    display: flex;
    justify-content: space-between;
    width: 332px;
}

.search-here,
.layers {
    display: flex;
    align-items: center;
    justify-content: center;
    height: 44px;
    border-radius: 12px;
    background: #eee;
    box-shadow: 0 2px 8px rgba(0, 0, 0, 0.15);
    font-size: 15px;
    letter-spacing: 0.4px;
}

.search-here {
    width: 122.500px;
}

.layers {
    width: 44px;
}

.street {
    fill: none;
    stroke: #f9f9f9;
    stroke-width: 5;
}

.road-white path,
.freeway path,
.road-grey path,
.road-dark {
    fill: none;
    vector-effect: non-scaling-stroke;
}

.road-white path {
    stroke: #fbfbfb;
    stroke-width: 2;
}

.freeway path {
    stroke: #cdcdcd;
    stroke-width: 5;
}

.road-grey path {
    stroke: #adadad;
    stroke-width: 2;
}

.road-dark {
    stroke: #333;
    stroke-width: 2.200;
}

.map-text {
    fill: #8a8a8a;
    font-family: "Open Sans", sans-serif;
    font-size: 8.500px;
}

.pin-text {
    fill: #fff;
    font-size: 10px;
    text-anchor: middle;
}

.sheet {
    position: relative;
    height: 320px;
    padding: 16px 33px 0;
    border-radius: 24px 24px 0 0;
    background: #fff;
}

.handle {
    width: 144px;
    height: 4.500px;
    margin: 0 auto 24px;
    border-radius: 3px;
    background: #cdced3;
}

.sheet .facts {
    margin-top: 11px;
}
```
